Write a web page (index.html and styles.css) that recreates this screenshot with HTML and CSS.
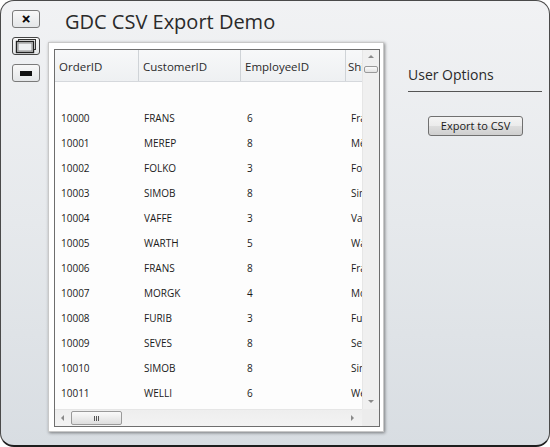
FILE: index.html
```html
<!DOCTYPE html>
<html>
<head>
<meta charset="utf-8">
<link rel="stylesheet" href="styles.css">
</head>
<body>
<div class="window">
  <div class="controls">
    <button class="ctl ctl-close">&#x2715;</button>
    <button class="ctl ctl-restore">
      <svg width="24" height="16" viewBox="0 0 24 16">
        <rect x="4.5" y="1.5" width="17" height="10" fill="none" stroke="#333" stroke-width="1"/>
        <rect x="2.5" y="3.5" width="17" height="11" fill="#eef0f2" stroke="#222" stroke-width="1.4"/>
        <rect x="4" y="5" width="14" height="8" fill="none" stroke="#888" stroke-width="1"/>
      </svg>
    </button>
    <button class="ctl ctl-min"><span class="bar"></span></button>
  </div>
  <div class="main">
    <div class="title">GDC CSV Export Demo</div>
    <div class="frame">
      <div class="grid">
        <div class="viewport">
          <div class="row head">
            <div class="c c1">OrderID</div>
            <div class="c c2">CustomerID</div>
            <div class="c c3">EmployeeID</div>
            <div class="c c4">ShipName</div>
          </div>
          <div class="row blank"></div>
          <div class="row"><div class="c c1">10000</div><div class="c c2">FRANS</div><div class="c c3">6</div><div class="c c4">Franchi</div></div>
          <div class="row"><div class="c c1">10001</div><div class="c c2">MEREP</div><div class="c c3">8</div><div class="c c4">Mère</div></div>
          <div class="row"><div class="c c1">10002</div><div class="c c2">FOLKO</div><div class="c c3">3</div><div class="c c4">Folk</div></div>
          <div class="row"><div class="c c1">10003</div><div class="c c2">SIMOB</div><div class="c c3">8</div><div class="c c4">Simons</div></div>
          <div class="row"><div class="c c1">10004</div><div class="c c2">VAFFE</div><div class="c c3">3</div><div class="c c4">Vaffel</div></div>
          <div class="row"><div class="c c1">10005</div><div class="c c2">WARTH</div><div class="c c3">5</div><div class="c c4">Wartian</div></div>
          <div class="row"><div class="c c1">10006</div><div class="c c2">FRANS</div><div class="c c3">8</div><div class="c c4">Franchi</div></div>
          <div class="row"><div class="c c1">10007</div><div class="c c2">MORGK</div><div class="c c3">4</div><div class="c c4">Morgen</div></div>
          <div class="row"><div class="c c1">10008</div><div class="c c2">FURIB</div><div class="c c3">3</div><div class="c c4">Furia</div></div>
          <div class="row"><div class="c c1">10009</div><div class="c c2">SEVES</div><div class="c c3">8</div><div class="c c4">Seven</div></div>
          <div class="row"><div class="c c1">10010</div><div class="c c2">SIMOB</div><div class="c c3">8</div><div class="c c4">Simons</div></div>
          <div class="row"><div class="c c1">10011</div><div class="c c2">WELLI</div><div class="c c3">6</div><div class="c c4">Wellington</div></div>
        </div>
        <div class="vscroll">
          <span class="arrow up"></span>
          <span class="vthumb"></span>
          <span class="vspace"></span>
          <span class="arrow down"></span>
        </div>
        <div class="hscroll">
          <span class="arrow left"></span>
          <span class="hthumb"><span class="grip"></span></span>
          <span class="hspace"></span>
          <span class="arrow right"></span>
        </div>
        <div class="corner"></div>
      </div>
    </div>
  </div>
  <div class="options">
    <div class="opt-title">User Options</div>
    <button class="export">Export to CSV</button>
  </div>
</div>
</body>
</html>
```

FILE: styles.css
```css
html, body {
  margin: 0;
  padding: 0;
  background: #ffffff;
}
body {
  font-family: "Open Sans", "Noto Sans", sans-serif;
  color: #222;
}
.window {
  box-sizing: border-box;
  width: 550px;
  height: 447px;
  border: 1px solid #4a4a4a;
  border-bottom: 2px solid #1e1e1e;
  border-radius: 14px;
  background: linear-gradient(to bottom, #f1f2f4 0%, #e6e9ec 50%, #d8dde2 100%);
  display: flex;
  padding: 9px 0 0 11px;
}
.controls {
  display: flex;
  flex-direction: column;
  width: 28px;
  margin-right: 8px;
  gap: 9px;
}
.ctl {
  box-sizing: border-box;
  width: 28px;
  height: 18px;
  padding: 0;
  border: 1px solid #7a7a7a;
  border-radius: 3px;
  background: linear-gradient(to bottom, #f8f8f8, #e4e6e8);
  display: flex;
  align-items: center;
  justify-content: center;
  font-family: "DejaVu Sans", sans-serif;
}
.ctl-close {
  font-size: 11px;
  font-weight: bold;
  color: #000;
  line-height: 1;
  -webkit-text-stroke: 0.6px #000;
}
.ctl-restore {
  border-color: #444;
}
.ctl-min .bar {
  display: block;
  width: 12px;
  height: 5px;
  background: #111;
}
.main {
  display: flex;
  flex-direction: column;
}
.title {
  height: 32px;
  padding-left: 17px;
  font-size: 20px;
  line-height: 24px;
  color: #2a2a2a;
}
.frame {
  box-sizing: border-box;
  width: 336px;
  height: 390px;
  background: #ffffff;
  padding: 6px 3px 4px 5px;
  box-shadow: 1px 1px 3px rgba(0, 0, 0, 0.45);
  border: 1px solid #c8c8c8;
}
.grid {
  box-sizing: border-box;
  height: 100%;
  border: 1px solid #6e6e6e;
  display: grid;
  grid-template-columns: 1fr 17px;
  grid-template-rows: 1fr 17px;
  background: #fdfdfd;
}
.viewport {
  overflow: hidden;
  display: flex;
  flex-direction: column;
}
.row {
  display: flex;
  height: 25px;
  flex: none;
  align-items: center;
  font-size: 10px;
  color: #1a1a1a;
}
.row.blank {
  height: 23px;
}
.row .c {
  flex: none;
  box-sizing: border-box;
  white-space: nowrap;
  overflow: hidden;
}
.c1 { width: 84px; padding-left: 6px; }
.c2 { width: 102px; padding-left: 5px; }
.c3 { width: 105px; padding-left: 6px; }
.c4 { width: 60px; padding-left: 5px; }
.row.head {
  height: 32px;
  background: linear-gradient(to bottom, #f7f8f9, #eef0f2);
  border-bottom: 1px solid #d5d8dc;
  box-sizing: border-box;
  align-items: stretch;
  font-size: 11.5px;
  color: #2a2a2a;
}
.row.head .c {
  display: flex;
  align-items: center;
  padding-top: 2px;
  padding-left: 4px;
  border-right: 1px solid #cfd3d7;
}
.row.head .c1 { width: 84px; }
.row.head .c4 { padding-left: 2px; border-right: none; }
.vscroll {
  display: flex;
  flex-direction: column;
  align-items: center;
  background: #f0f0f0;
  border-left: 1px solid #e6e6e6;
}
.hscroll {
  display: flex;
  align-items: center;
  background: linear-gradient(to bottom, #eeeeee, #f3f3f3);
  border-top: 1px solid #e6e6e6;
}
.corner {
  background: #ececec;
}
.arrow {
  display: block;
  width: 0;
  height: 0;
  flex: none;
}
.arrow.up {
  margin-top: 5px;
  border-left: 3px solid transparent;
  border-right: 3px solid transparent;
  border-bottom: 3px solid #8a8a8a;
}
.arrow.down {
  margin-bottom: 6px;
  border-left: 3px solid transparent;
  border-right: 3px solid transparent;
  border-top: 3px solid #8a8a8a;
}
.arrow.left {
  margin-left: 6px;
  border-top: 3px solid transparent;
  border-bottom: 3px solid transparent;
  border-right: 3px solid #8a8a8a;
}
.arrow.right {
  margin-right: 8px;
  border-top: 3px solid transparent;
  border-bottom: 3px solid transparent;
  border-left: 3px solid #8a8a8a;
}
.vthumb {
  display: block;
  flex: none;
  margin-top: 8px;
  width: 14px;
  height: 7px;
  box-sizing: border-box;
  border: 1px solid #9a9a9a;
  border-radius: 2px;
  background: linear-gradient(to bottom, #fbfbfb, #e2e2e2);
}
.vspace, .hspace { flex: 1; }
.hthumb {
  box-sizing: border-box;
  display: flex;
  align-items: center;
  justify-content: center;
  flex: none;
  margin-left: 7px;
  width: 51px;
  height: 14px;
  border: 1px solid #9a9a9a;
  border-radius: 2px;
  background: linear-gradient(to bottom, #fafafa, #dedede);
}
.grip {
  display: block;
  width: 5px;
  height: 5px;
  background: repeating-linear-gradient(to right, #555 0, #555 1px, transparent 1px, transparent 2px);
}
.options {
  margin-left: 24px;
  padding-top: 55px;
  width: 134px;
}
.opt-title {
  font-size: 14px;
  line-height: 20px;
  color: #2a2a2a;
  padding-bottom: 6px;
  border-bottom: 1px solid #555;
}
.export {
  box-sizing: border-box;
  margin: 24px 0 0 20px;
  width: 95px;
  height: 20px;
  padding: 0;
  border: 1px solid #707070;
  border-radius: 3px;
  background: linear-gradient(to bottom, #f4f4f4 0%, #ebebeb 50%, #dddddd 51%, #cfcfcf 100%);
  font-family: "Open Sans", "Noto Sans", sans-serif;
  font-size: 11px;
  color: #1a1a1a;
  line-height: 18px;
}
```
